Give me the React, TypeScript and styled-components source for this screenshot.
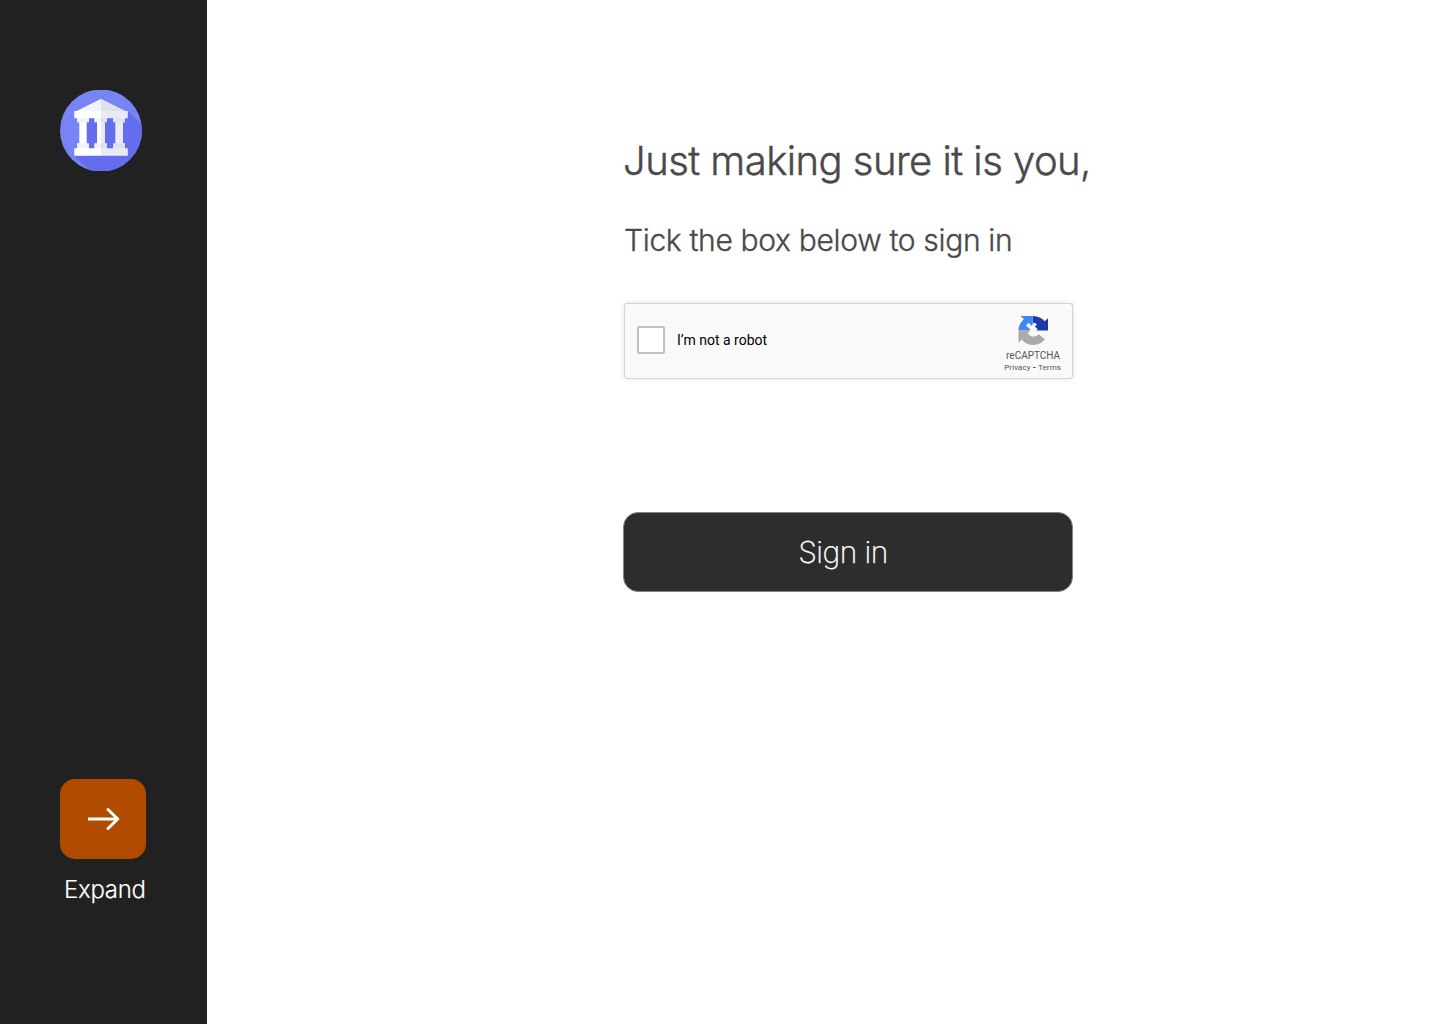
import React from "react";
import styled, { createGlobalStyle } from "styled-components";

const GlobalStyle = createGlobalStyle`
  *, *::before, *::after { box-sizing: border-box; }
  body { margin: 0; background: #fff; font-family: Inter, "Liberation Sans", sans-serif; }
  h1, h2, p { margin: 0; font-weight: 400; }
`;

const Page = styled.div`
  display: flex;
  height: 1024px;
  overflow: hidden;
`;

const Sidebar = styled.aside`
  display: flex;
  flex-direction: column;
  justify-content: space-between;
  flex: 0 0 207px;
  padding: 90px 60px 119px;
  background: #212121;
`;

const Logo = styled.svg`
  display: block;
  width: 82px;
  height: 81px;
`;

const ExpandGroup = styled.div`
  display: flex;
  flex-direction: column;
  align-items: flex-start;
  gap: 15px;
`;

const ExpandButton = styled.button`
  display: flex;
  align-items: center;
  justify-content: center;
  width: 86px;
  height: 80px;
  padding: 0 0 0 1px;
  border: 0;
  border-radius: 15px;
  background: #b04b00;
`;

const ExpandLabel = styled.span`
  padding-left: 4px;
  color: #fff;
  font-size: 24px;
  font-weight: 300;
  line-height: 31px;
  letter-spacing: -0.3px;
  -webkit-text-stroke: 0.15px #fff;
`;

const Main = styled.main`
  display: flex;
  flex-direction: column;
  align-items: flex-start;
  flex: 1;
  padding: 136px 0 0 416px;
`;

const Title = styled.h1`
  color: #4a4a4a;
  font-size: 40px;
  font-weight: 300;
  line-height: 50px;
  letter-spacing: -0.54px;
  white-space: nowrap;
  -webkit-text-stroke: 0.45px #4a4a4a;
`;

const Subtitle = styled.h2`
  margin: 35px 0 0 1px;
  color: #4a4a4a;
  font-size: 30px;
  font-weight: 300;
  line-height: 38px;
  letter-spacing: -0.33px;
  white-space: nowrap;
  -webkit-text-stroke: 0.35px #4a4a4a;
`;

const Captcha = styled.div`
  display: flex;
  align-items: flex-start;
  width: 449px;
  height: 76px;
  margin: 44px 0 0 1px;
  padding: 0 11px 0 12px;
  border: 1px solid #d3d3d3;
  border-radius: 3px;
  background: #f9f9f9;
  box-shadow: 0 0 4px 1px rgba(0, 0, 0, 0.08);
  font-family: Roboto, "Liberation Sans", sans-serif;
`;

const Checkbox = styled.span`
  width: 28px;
  height: 28px;
  margin-top: 22px;
  border: 2px solid #c1c1c1;
  border-radius: 2px;
  background: #fff;
`;

const CaptchaText = styled.span`
  flex: 1;
  padding: 28px 0 0 12px;
  color: #000;
  font-size: 14px;
  line-height: 17px;
`;

const Badge = styled.div`
  display: flex;
  flex-direction: column;
  align-items: center;
  padding-top: 12px;
  color: #555;
`;

const BadgeName = styled.span`
  margin-top: 5px;
  padding-left: 1px;
  font-size: 10px;
  line-height: 12px;
`;

const BadgeLinks = styled.span`
  font-size: 8px;
  line-height: 11px;
  letter-spacing: 0.1px;
`;

const Dash = styled.b`
  color: #222;
`;

const SignIn = styled.button`
  width: 450px;
  height: 80px;
  margin-top: 133px;
  padding: 0 10px 0 0;
  border: 1px solid #858585;
  border-radius: 15px;
  background: #2d2d2d;
  color: #fff;
  font-family: inherit;
  font-size: 30px;
  font-weight: 200;
  letter-spacing: -0.55px;
  -webkit-text-stroke: 0.25px #fff;
`;

const TempleLogo = () => (
  <Logo viewBox="10 10 82 81">
    <defs>
      <clipPath id="disc"><circle cx="51" cy="50.5" r="41" /></clipPath>
    </defs>
    <g clipPath="url(#disc)">
      <rect x="10" y="10" width="82" height="81" fill="#7784f4" />
      <path d="M51 31 H77.7 L96 49 V95 H44 L24.3 75.7 H33 V31 Z" fill="#636dee" />
    </g>
    <path d="M51 19 L27 31 H24.3 V38.3 H27.3 V42.3 H29.3 V63.3 H27.3 V68.3 H24.3 V75.7 H51 Z" fill="#fff" />
    <path d="M51 19 L75 31 H77.8 V38.3 H75 V42.3 H73 V63.3 H75 V68.3 H77.8 V75.7 H51 Z" fill="#e8ebf5" />
    <path d="M51 19 L27 31 H51 Z M27.3 38.3 H51 V42.3 H27.3 Z M27.3 63.3 H51 V68.3 H27.3 Z" fill="#f2f3f8" />
    <path d="M51 19 L75 31 H51 Z M51 38.3 H75 V42.3 H51 Z M51 63.3 H75 V68.3 H51 Z" fill="#dfe2ec" />
    <path d="M39 38.3 H44.3 V42.3 H47 V63.3 H44.3 V68.3 H39 V63.3 H36.7 V42.3 H39 Z M57 38.3 H63 V42.3 H65.3 V63.3 H63 V68.3 H57 V63.3 H55 V42.3 H57 Z" fill="#636dee" />
  </Logo>
);

const ArrowIcon = () => (
  <svg width="32" height="24" viewBox="0 0 32 24" fill="none" stroke="#fff" strokeWidth="3">
    <path d="M0 12 H30" />
    <path d="M20 2.5 L29.8 12 L20 21.5" strokeLinecap="round" strokeLinejoin="round" />
  </svg>
);

const RecaptchaIcon = () => (
  <svg width="30" height="29" viewBox="-1 0 65 64" preserveAspectRatio="none">
    <path d="M31 0.1 C42 0.1 51 4.7 56.8 11.8 L64 4.7 V32 H38 L42 29 L36 23.5 L40 18 Q36 15 31 15 Z" fill="#1c3aa9" />
    <path d="M4.6 0.1 H31 V19 L28 21.5 L22 15 L16 21 L25 29.5 V32 H0 C0 22 4.6 13.2 11.8 7.3 Z" fill="#4285f4" />
    <path d="M0 32 H25 L20 38 Q25 45.5 32 46 Q39 46 44 40.5 L57.4 51.3 C51.6 59 42.4 63.9 32 63.9 C22 63.9 13 59.3 7.2 52.2 L0 59.3 Z" fill="#ababab" />
  </svg>
);

export default function App() {
  return (
    <>
      <GlobalStyle />
      <Page>
        <Sidebar>
          <TempleLogo />
          <ExpandGroup>
            <ExpandButton aria-label="Expand"><ArrowIcon /></ExpandButton>
            <ExpandLabel>Expand</ExpandLabel>
          </ExpandGroup>
        </Sidebar>
        <Main>
          <Title>Just making sure it is you,</Title>
          <Subtitle>Tick the box below to sign in</Subtitle>
          <Captcha>
            <Checkbox />
            <CaptchaText>I’m not a robot</CaptchaText>
            <Badge>
              <RecaptchaIcon />
              <BadgeName>reCAPTCHA</BadgeName>
              <BadgeLinks>Privacy <Dash>-</Dash> Terms</BadgeLinks>
            </Badge>
          </Captcha>
          <SignIn>Sign in</SignIn>
        </Main>
      </Page>
    </>
  );
}
